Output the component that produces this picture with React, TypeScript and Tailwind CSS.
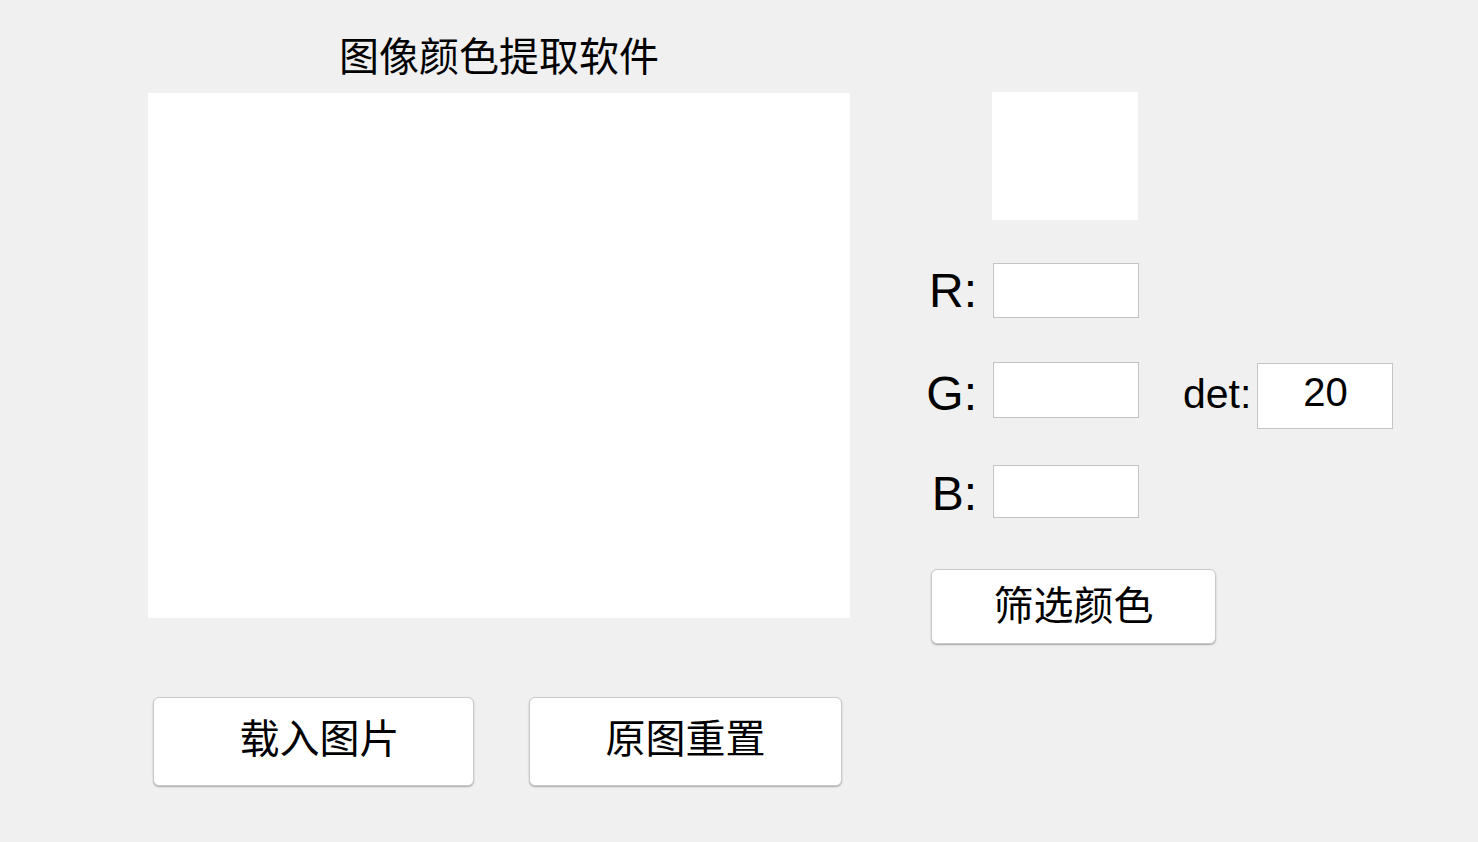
export default function App() {
  return (
    <div className="flex h-[842px] w-full bg-[#f0f0f0] text-black">
      {/* left column */}
      <div className="ml-[148px] flex w-[702px] flex-col">
        <h1 className="pt-[34px] text-center font-['Noto_Sans_CJK_SC','Liberation_Sans',sans-serif] text-[40px] font-normal leading-[40px]">
          图像颜色提取软件
        </h1>
        <div className="mt-[19px] h-[525px] w-full bg-white" />
        <div className="mt-[79px] flex gap-[55px] pl-[5px]">
          <button className="flex h-[89px] w-[321px] items-center justify-center rounded-[6px] border border-[#cacaca] bg-white pb-[12px] pl-[12px] font-['Noto_Sans_CJK_SC','Liberation_Sans',sans-serif] text-[40px] leading-[40px] shadow-[0_1px_1.5px_rgba(0,0,0,0.3)]">
            载入图片
          </button>
          <button className="flex h-[89px] w-[313px] items-center justify-center rounded-[6px] border border-[#cacaca] bg-white pb-[12px] font-['Noto_Sans_CJK_SC','Liberation_Sans',sans-serif] text-[40px] leading-[40px] shadow-[0_1px_1.5px_rgba(0,0,0,0.3)]">
            原图重置
          </button>
        </div>
      </div>

      {/* right column */}
      <div className="ml-[60px] flex flex-col pt-[92px] font-['Liberation_Sans','Noto_Sans_CJK_SC',sans-serif]">
        <div className="ml-[82px] h-[128px] w-[146px] bg-white" />

        <div className="mt-[43px] flex h-[55px] items-center">
          <span className="w-[83px] pr-[16px] text-right text-[48px] leading-none">R:</span>
          <input readOnly className="h-[55px] w-[146px] border border-[#c4c4c4] bg-white outline-none" />
        </div>

        <div className="mt-[44px] flex h-[56px] items-start">
          <div className="flex h-[56px] items-center">
            <span className="w-[83px] pt-[8px] pr-[16px] text-right text-[48px] leading-none">G:</span>
            <input readOnly className="h-[56px] w-[146px] border border-[#c4c4c4] bg-white outline-none" />
          </div>
          <div className="mt-[1px] ml-[44px] flex h-[66px] items-center">
            <span className="pb-[3px] text-[41px] leading-none">det:</span>
            <input
              readOnly
              value="20"
              className="ml-[6px] h-[66px] w-[136px] border border-[#c4c4c4] bg-white pb-[8px] text-center font-['Liberation_Sans',sans-serif] text-[40px] outline-none"
            />
          </div>
        </div>

        <div className="mt-[47px] flex h-[53px] items-center">
          <span className="w-[83px] pt-[5px] pr-[16px] text-right text-[48px] leading-none">B:</span>
          <input readOnly className="h-[53px] w-[146px] border border-[#c4c4c4] bg-white outline-none" />
        </div>

        <button className="mt-[51px] ml-[21px] flex h-[75px] w-[285px] items-center justify-center rounded-[6px] border border-[#cacaca] bg-white pb-[8px] font-['Noto_Sans_CJK_SC','Liberation_Sans',sans-serif] text-[40px] leading-[40px] shadow-[0_1px_1.5px_rgba(0,0,0,0.3)]">
          筛选颜色
        </button>
      </div>
    </div>
  );
}
